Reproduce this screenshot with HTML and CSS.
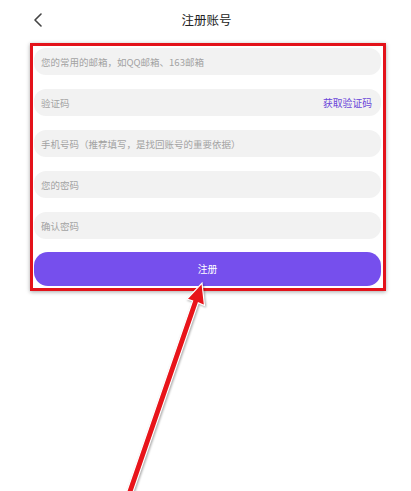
FILE: index.html
```html
<!DOCTYPE html>
<html lang="zh-CN">
<head>
<meta charset="utf-8">
<title>注册账号</title>
<link rel="stylesheet" href="styles.css">
</head>
<body>
<div class="page">
  <header class="header">
    <div class="back">
      <svg width="10" height="14" viewBox="0 0 10 14"><path d="M8 1 L2 7 L8 13" fill="none" stroke="#444" stroke-width="1.6" stroke-linecap="round" stroke-linejoin="round"/></svg>
    </div>
    <div class="title">注册账号</div>
    <div></div>
  </header>
  <section class="form">
    <div class="field"><span class="ph">您的常用的邮箱，如QQ邮箱、163邮箱</span></div>
    <div class="field"><span class="ph">验证码</span><span class="code">获取验证码</span></div>
    <div class="field"><span class="ph">手机号码（推荐填写，是找回账号的重要依据）</span></div>
    <div class="field"><span class="ph">您的密码</span></div>
    <div class="field"><span class="ph">确认密码</span></div>
    <div class="btn">注册</div>
  </section>
  <svg class="arrow" width="411" height="491" viewBox="0 0 411 491">
    <polygon points="202,283 204.5,305.5 198.3,302.9 131.6,496 125.9,494 192.6,300.9 187,299" fill="#e8141a" stroke="#ffffff" stroke-width="1.2" stroke-linejoin="miter"/>
  </svg>
</div>
</body>
</html>
```
FILE: styles.css
```css
html, body {
  margin: 0;
  padding: 0;
  background: #ffffff;
}
body {
  font-family: "Noto Sans CJK SC", "Noto Sans", sans-serif;
  width: 411px;
  height: 491px;
  overflow: hidden;
}
.page {
  position: relative;
  width: 411px;
  height: 491px;
}
.header {
  height: 38px;
  display: grid;
  grid-template-columns: 1fr auto 1fr;
  align-items: center;
}
.back {
  padding-left: 33px;
  display: flex;
  align-items: center;
  padding-top: 1px;
}
.title {
  font-size: 12.5px;
  color: #222;
  padding-left: 2px;
  padding-top: 1px;
}
.form {
  box-sizing: border-box;
  width: 356px;
  margin: 5px 0 0 30px;
  border: 3px solid #e3121a;
  box-shadow: 0 1px 4px rgba(0,0,0,0.35);
  padding: 2px 2px 2px 1px;
  display: flex;
  flex-direction: column;
  gap: 14px;
}
.field {
  height: 27px;
  background: #f2f2f2;
  border-radius: 12px;
  display: flex;
  align-items: center;
  justify-content: space-between;
  padding: 0 9px 0 7px;
}
.ph {
  font-size: 9.5px;
  color: #a3a3a3;
}
.code {
  font-size: 9.8px;
  color: #6a46d9;
}
.btn {
  margin-top: -1px;
  height: 34px;
  border-radius: 14px;
  background: #764fed;
  color: #ffffff;
  font-size: 9.8px;
  display: flex;
  align-items: center;
  justify-content: center;
}
.arrow {
  position: absolute;
  left: 0;
  top: 0;
  pointer-events: none;
  filter: drop-shadow(1px 1px 1px rgba(0,0,0,0.35));
}
```
